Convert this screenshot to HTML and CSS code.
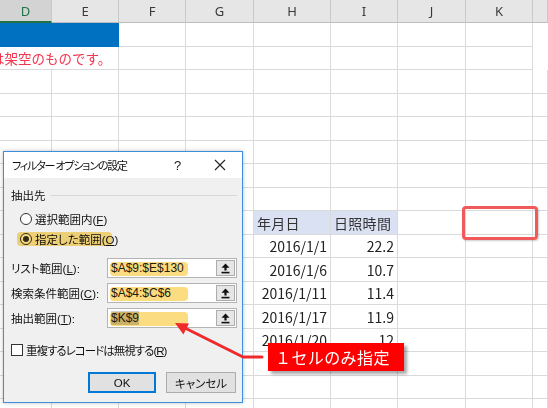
FILE: index.html
```html
<!DOCTYPE html>
<html lang="ja">
<head>
<meta charset="utf-8">
<title>フィルター オプションの設定</title>
<link rel="stylesheet" href="styles.css">
</head>
<body>
<div class="sheet">
  <div class="hdr">
    <div class="hc sel">D</div><div class="hc">E</div><div class="hc">F</div><div class="hc">G</div><div class="hc">H</div><div class="hc">I</div><div class="hc">J</div><div class="hc">K</div><div class="hc"></div>
  </div>
  <div class="row"><div class="c blue span2"></div><div class="c"></div><div class="c"></div><div class="c"></div><div class="c"></div><div class="c"></div><div class="c"></div></div>
  <div class="row"><div class="c span2 note"><span>は架空のものです。</span></div><div class="c"></div><div class="c"></div><div class="c"></div><div class="c"></div><div class="c"></div><div class="c"></div></div>
  <div class="row"><div class="c"></div><div class="c"></div><div class="c"></div><div class="c"></div><div class="c"></div><div class="c"></div><div class="c"></div><div class="c"></div><div class="c"></div></div>
  <div class="row"><div class="c"></div><div class="c"></div><div class="c"></div><div class="c"></div><div class="c"></div><div class="c"></div><div class="c"></div><div class="c"></div><div class="c"></div></div>
  <div class="row"><div class="c"></div><div class="c"></div><div class="c"></div><div class="c"></div><div class="c"></div><div class="c"></div><div class="c"></div><div class="c"></div><div class="c"></div></div>
  <div class="row"><div class="c"></div><div class="c"></div><div class="c"></div><div class="c"></div><div class="c"></div><div class="c"></div><div class="c"></div><div class="c"></div><div class="c"></div></div>
  <div class="row"><div class="c"></div><div class="c"></div><div class="c"></div><div class="c"></div><div class="c"></div><div class="c"></div><div class="c"></div><div class="c"></div><div class="c"></div></div>
  <div class="row"><div class="c"></div><div class="c"></div><div class="c"></div><div class="c"></div><div class="c"></div><div class="c"></div><div class="c"></div><div class="c"></div><div class="c"></div></div>
  <div class="row"><div class="c"></div><div class="c"></div><div class="c"></div><div class="c"></div><div class="c th">年月日</div><div class="c th">日照時間</div><div class="c"></div><div class="c"></div><div class="c"></div></div>
  <div class="row"><div class="c"></div><div class="c"></div><div class="c"></div><div class="c"></div><div class="c num">2016/1/1</div><div class="c num">22.2</div><div class="c"></div><div class="c"></div><div class="c"></div></div>
  <div class="row"><div class="c"></div><div class="c"></div><div class="c"></div><div class="c"></div><div class="c num">2016/1/6</div><div class="c num">10.7</div><div class="c"></div><div class="c"></div><div class="c"></div></div>
  <div class="row"><div class="c"></div><div class="c"></div><div class="c"></div><div class="c"></div><div class="c num">2016/1/11</div><div class="c num">11.4</div><div class="c"></div><div class="c"></div><div class="c"></div></div>
  <div class="row"><div class="c"></div><div class="c"></div><div class="c"></div><div class="c"></div><div class="c num">2016/1/17</div><div class="c num">11.9</div><div class="c"></div><div class="c"></div><div class="c"></div></div>
  <div class="row"><div class="c"></div><div class="c"></div><div class="c"></div><div class="c"></div><div class="c num">2016/1/20</div><div class="c num">12</div><div class="c"></div><div class="c"></div><div class="c"></div></div>
  <div class="row"><div class="c"></div><div class="c"></div><div class="c"></div><div class="c"></div><div class="c"></div><div class="c"></div><div class="c"></div><div class="c"></div><div class="c"></div></div>
  <div class="row"><div class="c"></div><div class="c"></div><div class="c"></div><div class="c"></div><div class="c"></div><div class="c"></div><div class="c"></div><div class="c"></div><div class="c"></div></div>
  <div class="row"><div class="c"></div><div class="c"></div><div class="c"></div><div class="c"></div><div class="c"></div><div class="c"></div><div class="c"></div><div class="c"></div><div class="c"></div></div>
</div>

<div class="mark"></div>

<div class="dialog">
  <div class="titlebar">
    <span class="title">フィルター オプションの設定</span>
    <span class="help">?</span>
    <svg class="close" width="12" height="12" viewBox="0 0 12 12"><path d="M1 1 L11 11 M11 1 L1 11" stroke="#222" stroke-width="1.1" fill="none"/></svg>
  </div>
  <div class="dbody">
    <div class="group"><span>抽出先</span><i class="rule"></i></div>
    <div class="radio first"><span class="dot"></span><span>選択範囲内(<u>F</u>)</span></div>
    <div class="radio on"><span class="dot"></span><span>指定した範囲(<u>O</u>)</span><span class="hl hl-radio"></span></div>
    <div class="field f1"><span class="lbl">リスト範囲(<u>L</u>):</span><div class="input"><span class="val">$A$9:$E$130</span><span class="hl hl-in"></span><span class="pick"><svg width="9" height="11" viewBox="0 0 9 11"><path d="M4.5 0.5 L8.5 4.8 L5.6 4.8 L5.6 7.6 L3.4 7.6 L3.4 4.8 L0.5 4.8 Z" fill="#111"/><rect x="0.5" y="8.8" width="8" height="1.6" fill="#111"/></svg></span></div></div>
    <div class="field"><span class="lbl">検索条件範囲(<u>C</u>):</span><div class="input"><span class="val">$A$4:$C$6</span><span class="hl hl-in"></span><span class="pick"><svg width="9" height="11" viewBox="0 0 9 11"><path d="M4.5 0.5 L8.5 4.8 L5.6 4.8 L5.6 7.6 L3.4 7.6 L3.4 4.8 L0.5 4.8 Z" fill="#111"/><rect x="0.5" y="8.8" width="8" height="1.6" fill="#111"/></svg></span></div></div>
    <div class="field"><span class="lbl">抽出範囲(<u>T</u>):</span><div class="input"><span class="val selected">$K$9</span><span class="hl hl-in"></span><span class="pick"><svg width="9" height="11" viewBox="0 0 9 11"><path d="M4.5 0.5 L8.5 4.8 L5.6 4.8 L5.6 7.6 L3.4 7.6 L3.4 4.8 L0.5 4.8 Z" fill="#111"/><rect x="0.5" y="8.8" width="8" height="1.6" fill="#111"/></svg></span></div></div>
    <div class="check"><span class="box"></span><span class="check-text">重複するレコードは無視する(<u>R</u>)</span></div>
    <div class="buttons"><span class="btn default">OK</span><span class="btn">キャンセル</span></div>
  </div>
</div>

<svg class="arrow" width="548" height="408" viewBox="0 0 548 408">
  <polyline points="262,357 243,357 184,327.5" fill="none" stroke="#f02a2a" stroke-width="3" stroke-linejoin="round" stroke-linecap="round"/>
  <polygon points="175,323 189,323.6 183.4,334.6" fill="#f02a2a"/>
</svg>

<div class="callout">１セルのみ指定</div>
</body>
</html>
```

FILE: styles.css
```css
html, body {
  margin: 0;
  padding: 0;
}
body {
  width: 548px;
  height: 408px;
  overflow: hidden;
  position: relative;
  background: #fff;
  font-family: "Noto Sans CJK JP", sans-serif;
}

/* ---------- spreadsheet ---------- */
.sheet {
  display: flex;
  flex-direction: column;
}
.hdr, .row {
  display: grid;
  grid-template-columns: 52px 67px 67px 68px 77px 67px 68px 67px 1fr;
}
.hdr {
  height: 23px;
  background: #e6e6e6;
}
.hc {
  box-sizing: border-box;
  border-right: 1px solid #c9c9c9;
  border-bottom: 1px solid #bdbdbd;
  font: 13px "Noto Sans", sans-serif;
  color: #3a3a3a;
  display: flex;
  align-items: center;
  justify-content: center;
}
.hc.sel {
  background: #d3d3d3;
  color: #217346;
  border-bottom: 2px solid #217346;
}
.row {
  height: 23px;
}
.row:nth-child(even) {
  height: 24px;
}
.c {
  box-sizing: border-box;
  border-right: 1px solid #dadada;
  border-bottom: 1px solid #dadada;
  font-size: 14px;
  color: #222;
  display: flex;
  align-items: center;
  white-space: nowrap;
  overflow: visible;
}
.span2 {
  grid-column: span 2;
}
.blue {
  background: #0070c0;
  border-right-color: #0070c0;
  border-bottom-color: #0070c0;
}
.note span {
  margin-left: -9px;
  font-size: 13.5px;
  color: #f5344f;
}
.th {
  background: #d9e1f2;
  padding-left: 3px;
  color: #333;
  letter-spacing: 0.3px;
}
.num {
  justify-content: flex-end;
  padding-right: 3px;
}

/* red mark around K9 */
.mark {
  position: absolute;
  left: 462px;
  top: 206px;
  width: 76px;
  height: 34px;
  box-sizing: border-box;
  border: 3px solid #f05a5a;
  border-radius: 4px;
  box-shadow: 1px 1px 2px rgba(0, 0, 0, 0.2);
}

/* ---------- dialog ---------- */
.dialog {
  position: absolute;
  left: 3px;
  top: 151px;
  width: 240px;
  height: 252px;
  box-sizing: border-box;
  border: 1px solid #3d8fdc;
  background: #f0f0f0;
  box-shadow: 0 0 4px rgba(0, 0, 0, 0.25);
  display: flex;
  flex-direction: column;
  font-family: "Liberation Sans", "Noto Sans CJK JP", sans-serif;
  font-feature-settings: "palt";
  font-size: 11.5px;
  color: #111;
}
.titlebar {
  height: 26px;
  background: #fff;
  display: flex;
  align-items: center;
  padding-left: 8px;
  flex-shrink: 0;
}
.title {
  font-family: "Noto Sans CJK JP", sans-serif;
  font-size: 11px;
  letter-spacing: -1.2px;
  flex: 1;
}
.help {
  font-size: 13px;
  width: 12px;
  margin-right: 28px;
  color: #222;
}
.close {
  margin-right: 16px;
}
.dbody {
  flex: 1;
  display: flex;
  flex-direction: column;
  padding: 9px 5px 0 7px;
}
.group {
  height: 16px;
  display: flex;
  align-items: center;
  gap: 4px;
}
.rule {
  flex: 1;
  height: 1px;
  background: #d7d7d7;
}
.radio {
  position: relative;
  height: 20px;
  display: flex;
  align-items: center;
  gap: 3px;
  padding-left: 9px;
}
.radio.first {
  margin-top: 6px;
}
.dot {
  width: 12px;
  height: 12px;
  box-sizing: border-box;
  border: 1px solid #333;
  border-radius: 50%;
  background: #fff;
  display: flex;
  align-items: center;
  justify-content: center;
}
.radio.on .dot::after {
  content: "";
  width: 6px;
  height: 6px;
  border-radius: 50%;
  background: #333;
}
.hl {
  position: absolute;
  background: #fcdc80;
  mix-blend-mode: multiply;
  border-radius: 4px;
  filter: blur(0.4px);
}
.hl-radio {
  left: 6px;
  top: 3px;
  width: 95px;
  height: 14px;
}
.field {
  height: 20px;
  margin-top: 5px;
  display: flex;
  align-items: center;
}
.field.f1 {
  margin-top: 9px;
}
.lbl {
  flex: 1;
}
.input {
  position: relative;
  width: 130px;
  height: 20px;
  box-sizing: border-box;
  border: 1px solid #b4b4b4;
  background: #fff;
  display: flex;
  align-items: center;
  padding-left: 3px;
  font-family: "Liberation Sans", sans-serif;
  font-size: 12px;
  color: #222;
}
.val {
  flex: 1;
}
.val.selected {
  flex: none;
  margin-right: auto;
  background: #cfcfcf;
}
.hl-in {
  left: 2px;
  top: 3px;
  width: 78px;
  height: 14px;
}
.pick {
  width: 19px;
  height: 16px;
  margin-right: 1px;
  box-sizing: border-box;
  border: 1px solid #adadad;
  background: #e6e6e6;
  display: flex;
  align-items: center;
  justify-content: center;
}
.check {
  margin-top: 12px;
  height: 20px;
  display: flex;
  align-items: center;
  gap: 3px;
}
.check-text {
  letter-spacing: -1px;
}
.box {
  width: 12px;
  height: 12px;
  box-sizing: border-box;
  border: 1px solid #333;
  background: #fff;
}
.buttons {
  margin-top: 12px;
  display: flex;
  justify-content: flex-end;
  gap: 10px;
  padding-right: 1px;
}
.btn {
  width: 70px;
  height: 21px;
  box-sizing: border-box;
  border: 1px solid #adadad;
  background: #e1e1e1;
  display: flex;
  align-items: center;
  justify-content: center;
  font-size: 11.5px;
}
.btn.default {
  width: 68px;
  border: 2px solid #0078d7;
}

/* ---------- annotations ---------- */
.arrow {
  position: absolute;
  left: 0;
  top: 0;
  pointer-events: none;
}
.callout {
  position: absolute;
  left: 268px;
  top: 343px;
  width: 136px;
  height: 28px;
  box-sizing: border-box;
  padding-left: 7px;
  background: #ff0000;
  color: #fff;
  font-size: 16px;
  letter-spacing: 0.4px;
  display: flex;
  align-items: center;
  box-shadow: 3px 3px 3px rgba(0, 0, 0, 0.35);
}
```
